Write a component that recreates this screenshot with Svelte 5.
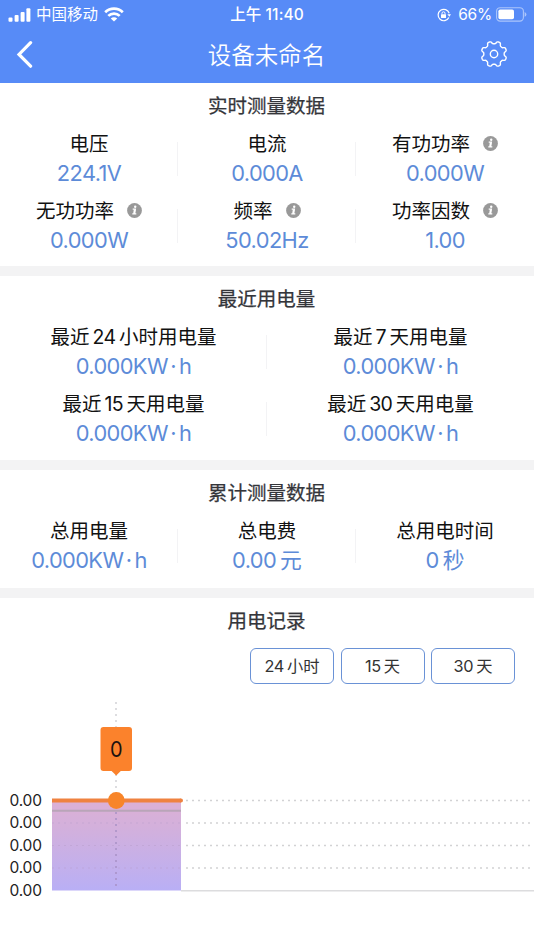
<script>
  const sections = [
    {
      title: '实时测量数据',
      rows: [
        [
          { label: '电压', value: '224.1V' },
          { label: '电流', value: '0.000A' },
          { label: '有功功率', value: '0.000W', info: true },
        ],
        [
          { label: '无功功率', value: '0.000W', info: true },
          { label: '频率', value: '50.02Hz', info: true },
          { label: '功率因数', value: '1.00', info: true },
        ],
      ],
    },
    {
      title: '最近用电量',
      rows: [
        [
          { label: '最近24小时用电量', value: '0.000KW·h' },
          { label: '最近7天用电量', value: '0.000KW·h' },
        ],
        [
          { label: '最近15天用电量', value: '0.000KW·h' },
          { label: '最近30天用电量', value: '0.000KW·h' },
        ],
      ],
    },
    {
      title: '累计测量数据',
      rows: [
        [
          { label: '总用电量', value: '0.000KW·h' },
          { label: '总电费', value: '0.00元' },
          { label: '总用电时间', value: '0秒' },
        ],
      ],
    },
  ];

  const ranges = ['24小时', '15天', '30天'];
  const ticks = [800.5, 823, 845.5, 868, 890.5];

  // Splits mixed text into Latin, dot and Chinese runs so each gets its own spacing.
  function runs(text) {
    return (text.match(/[\x20-\x7e]+|·|[^\x20-\x7e·]+/g) ?? []).map((t) => ({
      t,
      latin: /^[\x20-\x7e]/.test(t),
      dot: t === '·',
    }));
  }

  // Outline of a gear with eight rounded teeth.
  function gear(cx, cy, outer, inner, teeth) {
    const pts = [];
    const n = 160;
    for (let i = 0; i < n; i++) {
      const a = (i / n) * Math.PI * 2;
      const w = Math.tanh(2 * Math.cos(teeth * (a - Math.PI / 8))) / Math.tanh(2);
      const r = (outer + inner) / 2 + ((outer - inner) / 2) * w;
      pts.push(`${(cx + r * Math.cos(a)).toFixed(2)} ${(cy + r * Math.sin(a)).toFixed(2)}`);
    }
    return 'M' + pts.join('L') + 'Z';
  }
  const gearPath = gear(14, 14, 12.8, 10.2, 8);
</script>

{#snippet mixed(text)}
  {#each runs(text) as run}<span class:latin={run.latin} class:dot={run.dot}>{run.t}</span>{/each}
{/snippet}

<div class="screen">
  <header>
    <div class="status">
      <div class="side left">
        <svg width="23" height="14" viewBox="0 0 23 14" fill="#fff">
          <rect x="0.5" y="9.5" width="4" height="4.2" rx="1" />
          <rect x="6.6" y="7" width="4" height="6.7" rx="1" />
          <rect x="12.6" y="4" width="4" height="9.7" rx="1" />
          <rect x="18.4" y="0.3" width="4" height="13.4" rx="1" />
        </svg>
        <span class="carrier">中国移动</span>
        <svg width="20" height="15" viewBox="0 0 20 15" fill="none" stroke="#fff" stroke-width="2.7">
          <path d="M1.2 5.3A12.6 12.6 0 0 1 18.8 5.3" />
          <path d="M4.3 8.9A8.2 8.2 0 0 1 15.7 8.9" />
          <path d="M10 14.6L6.8 11.5A4.6 4.6 0 0 1 13.2 11.5Z" fill="#fff" stroke="none" />
        </svg>
      </div>
      <div class="clock">上午 11:40</div>
      <div class="side right">
        <svg width="14" height="14" viewBox="0 0 14 14" fill="none" stroke="#fff" stroke-width="1.2">
          <path d="M11.9 9.6A5.7 5.7 0 1 1 12.2 5.2" />
          <path d="M10.4 6.2L14 6.2L12.3 8.8Z" fill="#fff" stroke="none" />
          <rect x="4" y="6.2" width="5" height="3.8" rx=".5" fill="#fff" stroke="none" />
          <path d="M5 6.4V5.3A1.5 1.5 0 0 1 8 5.3V6.4" stroke-width="1" />
        </svg>
        <span class="percent">66%</span>
        <svg width="31" height="15" viewBox="0 0 31 15">
          <rect x="0.6" y="0.7" width="26.8" height="13.4" rx="3.6" fill="none" stroke="#fff" stroke-opacity=".5" stroke-width="1.1" />
          <rect x="2.4" y="2.5" width="15.6" height="9.8" rx="1.8" fill="#fff" />
          <path d="M28.6 5.1Q30.4 5.8 30.4 7.4T28.6 9.7Z" fill="#fff" fill-opacity=".5" />
        </svg>
      </div>
    </div>
    <div class="nav">
      <svg width="18" height="28" viewBox="0 0 18 28" fill="none" stroke="#fff" stroke-width="3.2" stroke-linecap="round" stroke-linejoin="miter">
        <path d="M15.6 2.6L4 14.4L15.6 26.2" />
      </svg>
      <h1>设备未命名</h1>
      <svg width="28" height="28" viewBox="0 0 28 28" fill="none" stroke="#fff" stroke-width="1.4">
        <path d={gearPath} />
        <circle cx="14" cy="14" r="3.7" />
      </svg>
    </div>
  </header>

  {#each sections as section}
    <section>
      <h2>{section.title}</h2>
      {#each section.rows as row}
        <div class="row">
          {#each row as cell}
            <div class="cell">
              <div class="label">
                <span class="text">{@render mixed(cell.label)}</span>
                {#if cell.info}
                  <svg width="15" height="15" viewBox="0 0 15 15">
                    <circle cx="7.5" cy="7.5" r="7.4" fill="#999" />
                    <circle cx="8.2" cy="3.7" r="1.2" fill="#fff" />
                    <path d="M5.7 6.2H8.4L7.6 10.8H9.1M5.3 10.9H9.3" fill="none" stroke="#fff" stroke-width="1.2" />
                    <path d="M7.7 6.4L7 10.8" stroke="#fff" stroke-width="1.7" />
                  </svg>
                {/if}
              </div>
              <div class="value">{@render mixed(cell.value)}</div>
            </div>
          {/each}
        </div>
      {/each}
    </section>
  {/each}

  <section class="record">
    <h2>用电记录</h2>
    <div class="ranges">
      {#each ranges as range}
        <button>{@render mixed(range)}</button>
      {/each}
    </div>
    <svg class="chart" width="534" height="260" viewBox="0 690 534 260">
      <defs>
        <linearGradient id="area" x1="0" y1="0" x2="0" y2="1">
          <stop offset="0" stop-color="#dcb0d5" />
          <stop offset=".3" stop-color="#d3b0dc" />
          <stop offset="1" stop-color="#b9aff5" />
        </linearGradient>
      </defs>
      <rect x="52" y="800.5" width="129" height="90" fill="url(#area)" />
      {#each ticks as y, i}
        {#if i < 4}
          <line x1="52" x2="181" y1={y} y2={y} stroke="#b79dcc" stroke-opacity=".5" stroke-dasharray="2 4" />
          <line x1="186" x2="534" y1={y} y2={y} stroke="#d2d2d4" stroke-width="1.3" stroke-dasharray="2 4" />
        {/if}
        <text x="9.5" y={y + 5.4} textLength="32.5">0.00</text>
      {/each}
      <line x1="181" x2="534" y1="890.7" y2="890.7" stroke="#dcdcde" stroke-width="1.5" />
      <line x1="52" x2="181" y1="810.8" y2="810.8" stroke="#b9a5b8" stroke-width="2" />
      <line x1="116" x2="116" y1="702" y2="800" stroke="#cfcfd3" stroke-width="1.4" stroke-dasharray="2 4" />
      <line x1="116" x2="116" y1="812" y2="890" stroke="#a68fc4" stroke-width="1.4" stroke-dasharray="2 4" />
      <line x1="52" x2="181" y1="800.5" y2="800.5" stroke="#ef8240" stroke-width="4" />
      <circle cx="181" cy="800.5" r="2" fill="#ef8240" />
      <circle cx="116.3" cy="800.5" r="8.4" fill="#f88529" />
      <path d="M103.5 727H129a3 3 0 0 1 3 3V768a3 3 0 0 1-3 3H120.8L116.2 775.5L111.6 771H103.5a3 3 0 0 1-3-3V730a3 3 0 0 1 3-3Z" fill="#fb822c" />
      <text class="tip" x="116.3" y="757" text-anchor="middle" textLength="12.6" lengthAdjust="spacingAndGlyphs">0</text>
    </svg>
  </section>
</div>

<style>
  .screen {
    width: 534px;
    height: 950px;
    overflow: hidden;
    background: #fff;
    color: #1a1a1a;
    font-family: Inter, 'Noto Sans CJK SC', sans-serif;
    display: flex;
    flex-direction: column;
  }
  svg {
    display: block;
    flex: none;
  }
  header {
    height: 83px;
    flex: none;
    background: #578bf7;
    color: #fff;
  }
  .status {
    height: 27px;
    display: grid;
    grid-template-columns: 1fr auto 1fr;
    align-items: center;
    padding: 0 8px;
    font-size: 15.5px;
    line-height: 29px;
    white-space: nowrap;
  }
  .side {
    display: flex;
    align-items: center;
  }
  .carrier {
    margin: 0 6px 0 5px;
  }
  .clock {
    font-weight: 500;
    letter-spacing: 0.1px;
  }
  .right {
    justify-content: flex-end;
  }
  .percent {
    margin: 0 4px 0 7px;
    letter-spacing: -0.2px;
  }
  .right svg:last-child {
    margin-right: -1px;
  }
  .nav {
    height: 54px;
    display: flex;
    align-items: center;
    justify-content: space-between;
    padding: 0 26px 0 15px;
  }
  h1 {
    margin: 0 0 0 20px;
    padding-top: 3px;
    font-size: 23.5px;
    line-height: 54px;
    font-weight: 350;
  }
  section {
    flex: none;
    padding-bottom: 8px;
    border-bottom: 10px solid #f3f3f4;
  }
  section:nth-of-type(2) {
    padding-bottom: 9px;
  }
  section:nth-of-type(3) {
    padding-bottom: 10px;
  }
  section.record {
    border: 0;
    padding: 0;
  }
  h2 {
    margin: 0;
    height: 41px;
    padding-right: 1px;
    line-height: 47px;
    font-size: 19.5px;
    font-weight: 400;
    -webkit-text-stroke: 0.25px #34353a;
    color: #34353a;
    text-align: center;
  }
  .row {
    display: flex;
    height: 67px;
  }
  .cell {
    flex: 1 1 0;
    min-width: 0;
    display: flex;
    flex-direction: column;
    align-items: center;
    background: linear-gradient(#f3f3f5, #f3f3f5) right 18px / 1px 34px no-repeat;
  }
  .cell:last-child {
    background: none;
  }
  .label {
    height: 37px;
    display: flex;
    align-items: center;
    gap: 13px;
    font-size: 19.5px;
    line-height: 37px;
    color: #111;
    white-space: nowrap;
  }
  .text {
    padding-top: 3px;
  }
  .label svg {
    margin-top: 1px;
  }
  .label .latin {
    margin: 0 3.5px 0 3px;
    letter-spacing: -0.7px;
  }
  .value {
    height: 24px;
    line-height: 24px;
    font-size: 21.8px;
    color: #5d8bd8;
    white-space: nowrap;
  }
  .value .latin {
    letter-spacing: -0.6px;
  }
  .value .latin:first-child:not(:last-child) {
    margin-right: 4px;
  }
  .value .dot {
    margin: 0 2.5px 0 -1.5px;
  }
  .ranges {
    display: flex;
    justify-content: flex-end;
    gap: 6.5px;
    padding: 9px 19px 6px 0;
  }
  button {
    width: 84px;
    height: 36px;
    padding: 0;
    border: 1.5px solid #6a92d6;
    border-radius: 6px;
    background: #fff;
    color: #333;
    font: 400 16.3px/33px Inter, 'Noto Sans CJK SC', sans-serif;
  }
  button .latin {
    margin-right: 3px;
    letter-spacing: -0.3px;
  }
  text {
    font-size: 15.5px;
    fill: #222;
  }
  .tip {
    font-size: 22px;
    fill: #1c1210;
  }
</style>
